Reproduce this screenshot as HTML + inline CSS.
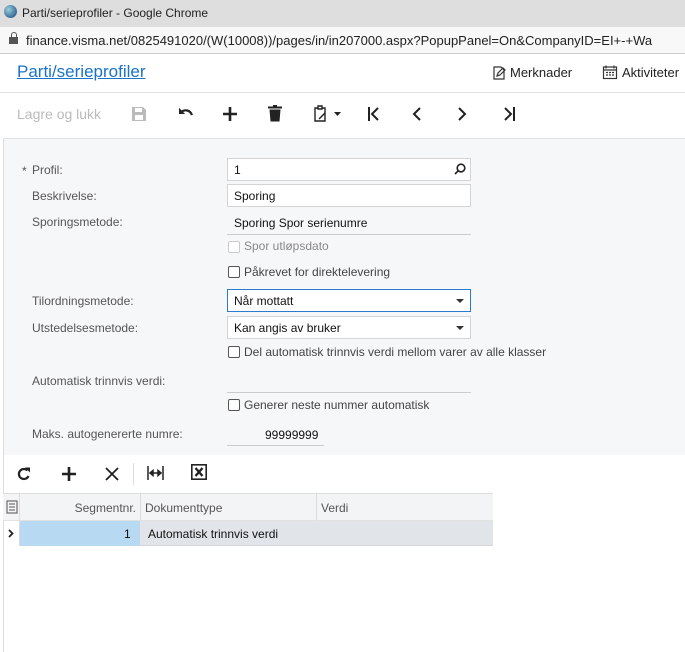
<!DOCTYPE html><html><head><style>
*{margin:0;padding:0;box-sizing:border-box}
body{width:685px;height:652px;overflow:hidden;font-family:"Liberation Sans",Arial,sans-serif;font-size:12px;color:#222;background:#fff;position:relative}
.a{position:absolute}
svg.a{overflow:visible}
.lbl{position:absolute;left:32px;color:#555;font-size:12px}
.inp{position:absolute;left:227px;width:244px;height:23px;border:1px solid #d4d4d4;background:#fff;padding:4px 6px;font-size:12px;color:#111}
.cb{position:absolute;left:228px;width:12px;height:12px;border:1px solid #555;border-radius:2px;background:#fff}
.cbl{position:absolute;left:244px;color:#444;font-size:12px}
</style></head><body>
<div class="a" style="left:0;top:0;width:685px;height:27px;background:#dedede"></div>
<div class="a" style="left:4px;top:5px;width:13px;height:13px;border-radius:50%;background:radial-gradient(circle at 35% 35%,#9cd,#147)"></div>
<div class="a" style="left:22px;top:6px;font-size:12px;color:#222">Parti/serieprofiler - Google Chrome</div>
<div class="a" style="left:0;top:27px;width:685px;height:27px;background:#f8f8f8;border-bottom:1px solid #ccc"></div>
<div class="a" style="left:9px;top:37px;width:9px;height:7px;background:#555"></div>
<div class="a" style="left:10.5px;top:32px;width:6px;height:7px;border:1.5px solid #555;border-bottom:none;border-radius:3px 3px 0 0"></div>
<div class="a" style="left:26px;top:33px;font-size:13px;color:#222;white-space:nowrap">finance.visma.net/0825491020/(W(10008))/pages/in/in207000.aspx?PopupPanel=On&amp;CompanyID=EI+-+Wa</div>
<div class="a" style="left:17px;top:62px;font-size:17px;color:#1a73c8;text-decoration:underline">Parti/serieprofiler</div>
<svg class="a" style="left:491px;top:65px" width="16" height="16" viewBox="0 0 16 16" fill="none" stroke="#333" stroke-width="1.2"><path d="M3 2h7l3 3v9H3z"/><path d="M6 11l1-3 5-5 2 2-5 5z"/></svg>
<div class="a" style="left:510px;top:65px;font-size:13px;color:#222">Merknader</div>
<svg class="a" style="left:602px;top:64px" width="16" height="16" viewBox="0 0 16 16" fill="none" stroke="#333" stroke-width="1.2"><rect x="1.5" y="3" width="13" height="11.5"/><path d="M1.5 6h13M4 1.5v3M12 1.5v3M4 8.5h2M7 8.5h2M10 8.5h2M4 11h2M7 11h2M10 11h2"/></svg>
<div class="a" style="left:622px;top:65px;font-size:13px;color:#222">Aktiviteter</div>
<div class="a" style="left:0;top:92px;width:685px;height:1px;background:#e2e2e2"></div>
<div class="a" style="left:17px;top:106px;font-size:14px;color:#bbb">Lagre og lukk</div>
<svg class="a" style="left:132px;top:107px" width="14" height="14" viewBox="0 0 14 14"><path d="M0 0h11l3 3v11H0z" fill="#bbb"/><rect x="3" y="1" width="7" height="4" fill="#fff"/><rect x="3" y="8" width="8" height="5" fill="#fff"/></svg>
<svg class="a" style="left:178px;top:107px" width="16" height="12" viewBox="0 0 16 12" fill="none" stroke="#222" stroke-width="2.2"><path d="M3 5c4-3 9-2 11 3"/><path d="M1 1v6h6" fill="#222" stroke="none"/><path d="M1 1l6 6H1z" fill="#222" stroke="none"/></svg>
<svg class="a" style="left:223px;top:107px" width="14" height="14" viewBox="0 0 14 14" stroke="#222" stroke-width="2.6"><path d="M7 0v14M0 7h14"/></svg>
<svg class="a" style="left:268px;top:105px" width="14" height="17" viewBox="0 0 14 17" fill="#222"><rect x="0" y="1.5" width="14" height="2"/><rect x="5" y="0" width="4" height="2"/><path d="M1.5 4.5h11l-1 12h-9z"/></svg>
<svg class="a" style="left:314px;top:105px" width="28" height="17" viewBox="0 0 28 17" fill="none" stroke="#222" stroke-width="1.4"><path d="M1 3h10v13H1z"/><path d="M4 1h4v3H4z" fill="#fff"/><path d="M5 14l6-6" /><path d="M20 7h7l-3.5 4z" fill="#222" stroke="none"/></svg>
<svg class="a" style="left:367px;top:107px" width="14" height="14" viewBox="0 0 14 14" fill="none" stroke="#222" stroke-width="2"><path d="M2 0v14M11 1L5 7l6 6"/></svg>
<svg class="a" style="left:412px;top:107px" width="10" height="14" viewBox="0 0 10 14" fill="none" stroke="#222" stroke-width="2"><path d="M8 1L2 7l6 6"/></svg>
<svg class="a" style="left:457px;top:107px" width="10" height="14" viewBox="0 0 10 14" fill="none" stroke="#222" stroke-width="2"><path d="M2 1l6 6-6 6"/></svg>
<svg class="a" style="left:502px;top:107px" width="14" height="14" viewBox="0 0 14 14" fill="none" stroke="#222" stroke-width="2"><path d="M12 0v14M3 1l6 6-6 6"/></svg>
<div class="a" style="left:3px;top:138px;width:682px;height:317px;background:#f6f7f9;border-top:1px solid #e2e2e2;border-left:1px solid #ddd"></div>
<div class="a" style="left:22px;top:164px;color:#555">*</div>
<div class="lbl" style="top:163px">Profil:</div>
<div class="inp" style="top:158px">1<svg style="position:absolute;right:4px;top:4px" width="12" height="12" viewBox="0 0 12 12" fill="none" stroke="#222" stroke-width="1.6"><circle cx="7" cy="5" r="3.8"/><path d="M4.3 7.7L1 11"/></svg></div>
<div class="lbl" style="top:189px">Beskrivelse:</div>
<div class="inp" style="top:184px">Sporing</div>
<div class="lbl" style="top:215px">Sporingsmetode:</div>
<div class="a" style="left:234px;top:216px;color:#111">Sporing Spor serienumre</div>
<div class="a" style="left:227px;top:234px;width:244px;height:1px;background:#ccc"></div>
<div class="cb" style="top:241px;border-color:#ccc"></div><div class="cbl" style="top:239px;color:#888">Spor utløpsdato</div>
<div class="cb" style="top:266px"></div><div class="cbl" style="top:265px">Påkrevet for direktelevering</div>
<div class="lbl" style="top:294px">Tilordningsmetode:</div>
<div class="inp" style="top:289px;border-color:#2b7bd0">Når mottatt<svg style="position:absolute;right:6px;top:9px" width="8" height="5"><path d="M0 0h8L4 4z" fill="#333"/></svg></div>
<div class="lbl" style="top:321px">Utstedelsesmetode:</div>
<div class="inp" style="top:316px">Kan angis av bruker<svg style="position:absolute;right:6px;top:9px" width="8" height="5"><path d="M0 0h8L4 4z" fill="#333"/></svg></div>
<div class="cb" style="top:346px"></div><div class="cbl" style="top:345px">Del automatisk trinnvis verdi mellom varer av alle klasser</div>
<div class="lbl" style="top:374px">Automatisk trinnvis verdi:</div>
<div class="a" style="left:227px;top:392px;width:244px;height:1px;background:#ccc"></div>
<div class="cb" style="top:399px"></div><div class="cbl" style="top:398px">Generer neste nummer automatisk</div>
<div class="lbl" style="top:427px">Maks. autogenererte numre:</div>
<div class="a" style="left:265px;top:428px;color:#111">99999999</div>
<div class="a" style="left:227px;top:445px;width:97px;height:1px;background:#ccc"></div>
<svg class="a" style="left:17px;top:467px" width="14" height="14" viewBox="0 0 14 14" fill="none" stroke="#222" stroke-width="2.2"><path d="M11.5 9A5 5 0 1 1 10.5 3.5"/><path d="M8 0.5h5v5z" fill="#222" stroke="none"/></svg>
<svg class="a" style="left:62px;top:467px" width="14" height="14" viewBox="0 0 14 14" stroke="#222" stroke-width="2.6"><path d="M7 0v14M0 7h14"/></svg>
<svg class="a" style="left:105px;top:467px" width="14" height="14" viewBox="0 0 14 14" stroke="#222" stroke-width="1.8"><path d="M1 1l12 12M13 1L1 13"/></svg>
<div class="a" style="left:133px;top:463px;width:1px;height:22px;background:#ddd"></div>
<svg class="a" style="left:147px;top:466px" width="17" height="14" viewBox="0 0 17 14" fill="none" stroke="#222" stroke-width="1.5"><path d="M1 0v14M16 0v14M3.5 7h10"/><path d="M3 7l3-2.5v5zM14 7l-3-2.5v5z" fill="#222"/></svg>
<svg class="a" style="left:191px;top:464px" width="16" height="16" viewBox="0 0 16 16" fill="none" stroke="#222"><rect x="0.8" y="0.8" width="14.4" height="14.4" stroke-width="1.6"/><path d="M4.5 4l7 8M11.5 4l-7 8" stroke-width="2.4"/></svg>
<div class="a" style="left:3px;top:455px;width:1px;height:197px;background:#ddd"></div>
<div class="a" style="left:3px;top:493px;width:490px;height:28px;background:#f3f4f6;border-top:1px solid #ddd;border-bottom:1px solid #e2e2e2"></div>
<svg class="a" style="left:6px;top:500px" width="12" height="14" viewBox="0 0 12 14" fill="none" stroke="#777" stroke-width="1.3"><rect x="1" y="1" width="10" height="12"/><path d="M3 4h6M3 7h6M3 10h6"/></svg>
<div class="a" style="left:19px;top:494px;width:1px;height:52px;background:#ddd"></div>
<div class="a" style="left:140px;top:494px;width:1px;height:27px;background:#ddd"></div>
<div class="a" style="left:316px;top:494px;width:1px;height:27px;background:#ddd"></div>
<div class="a" style="left:60px;top:501px;color:#555;width:76px;text-align:right">Segmentnr.</div>
<div class="a" style="left:145px;top:501px;color:#555">Dokumenttype</div>
<div class="a" style="left:321px;top:501px;color:#555">Verdi</div>
<div class="a" style="left:20px;top:521px;width:473px;height:25px;background:#e1e4e8;border-bottom:1px solid #d4d4d4"></div>
<div class="a" style="left:20px;top:521px;width:120px;height:25px;background:#b7d9f2"></div>
<svg class="a" style="left:8px;top:529px" width="6" height="9" viewBox="0 0 6 9" fill="none" stroke="#222" stroke-width="1.8"><path d="M1 1l3.5 3.5L1 8"/></svg>
<div class="a" style="left:124px;top:527px;color:#111">1</div>
<div class="a" style="left:148px;top:527px;color:#111">Automatisk trinnvis verdi</div>
</body></html>
